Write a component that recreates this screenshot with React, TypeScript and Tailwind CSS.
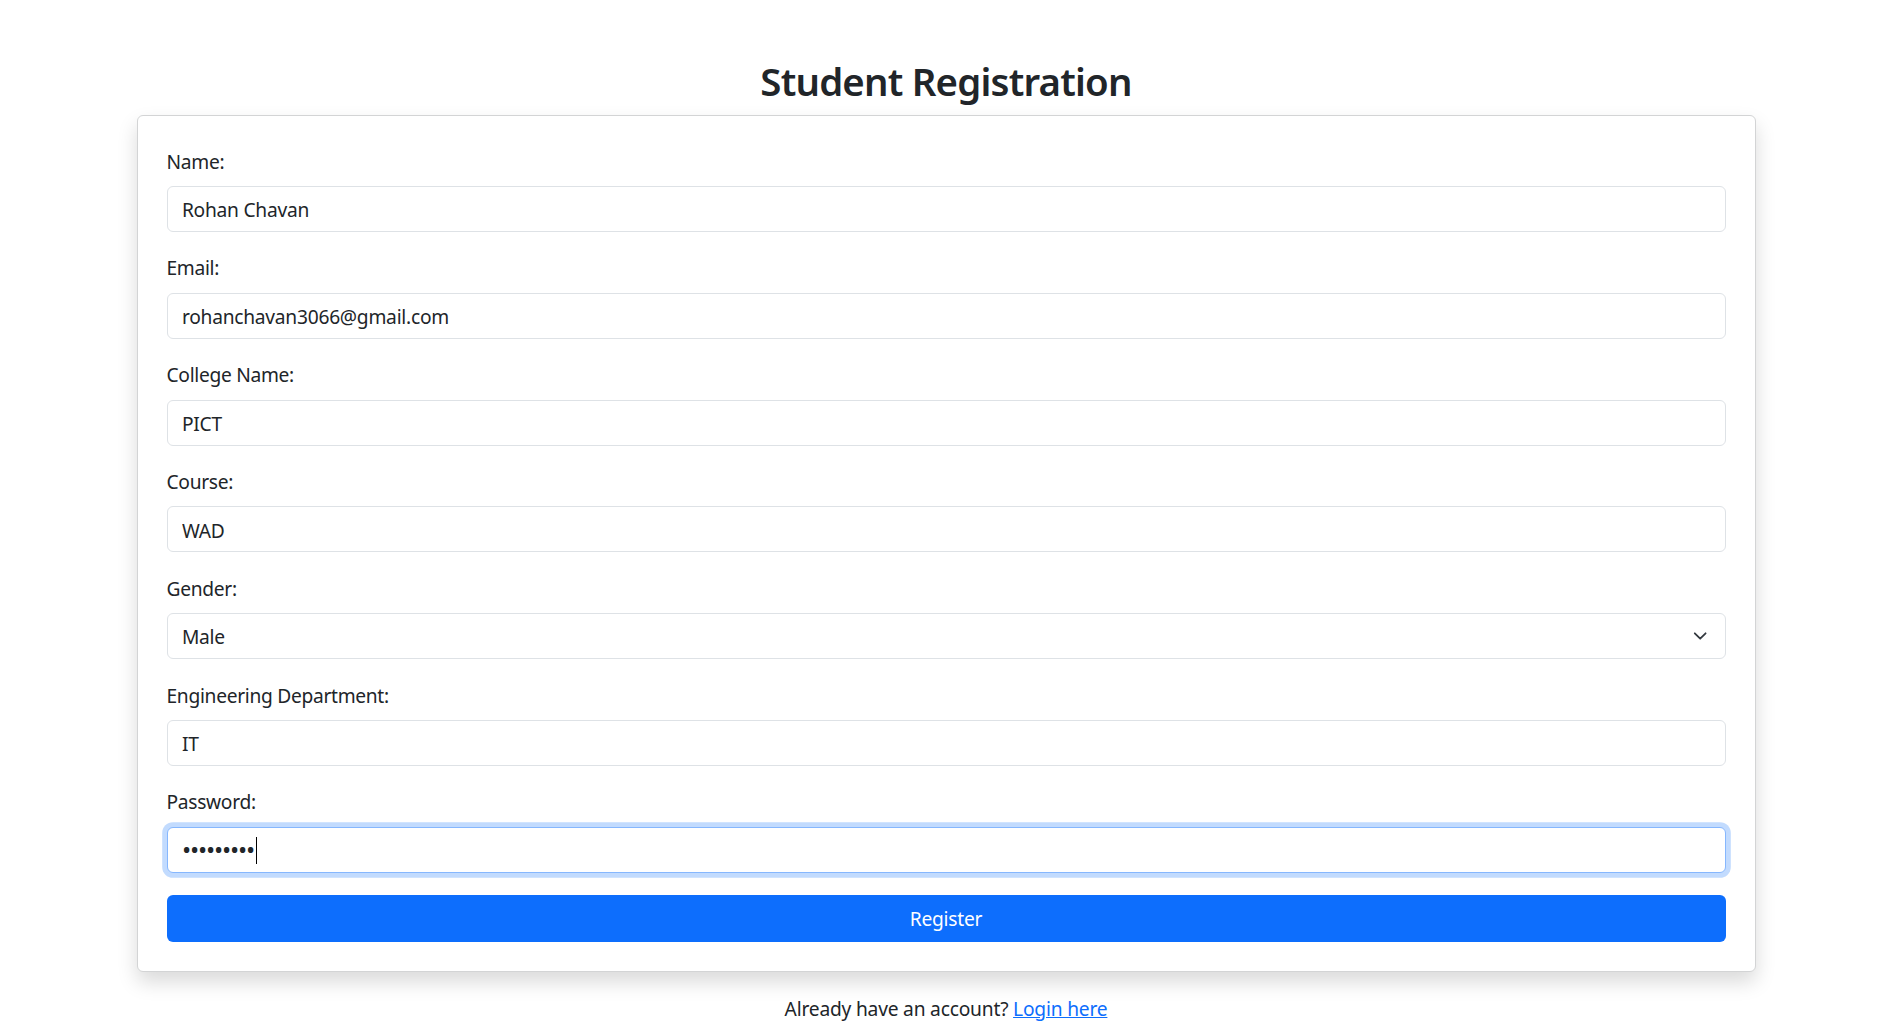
import { useState } from "react";

const fields = [
  { id: "name", label: "Name:", type: "text" },
  { id: "email", label: "Email:", type: "email" },
  { id: "college", label: "College Name:", type: "text" },
  { id: "course", label: "Course:", type: "text" },
];

const inputClass =
  "block h-[46px] w-full rounded-[6px] border border-[#dee2e6] bg-white px-[14.4px] pt-[2px] text-[19.2px] leading-[28.8px] tracking-[-0.25px] text-[#212529] outline-none";

function Field({ label, htmlFor, children }: { label: string; htmlFor: string; children: React.ReactNode }) {
  return (
    <div className="mb-[22.4px]">
      <label
        htmlFor={htmlFor}
        className="mb-[9.6px] block text-[19.2px] leading-[28.8px] tracking-[-0.3px] text-[#212529]"
      >
        {label}
      </label>
      {children}
    </div>
  );
}

export default function App() {
  const [form, setForm] = useState({
    name: "Rohan Chavan",
    email: "rohanchavan3066@gmail.com",
    college: "PICT",
    course: "WAD",
    gender: "Male",
    department: "IT",
    password: "123456789",
  });

  const update = (key: string, value: string) => setForm((prev) => ({ ...prev, [key]: value }));

  return (
    <div className="min-h-screen bg-white pt-[58px] font-['Noto_Sans',sans-serif] text-[#212529]">
      <div className="mx-auto w-[1619px]">
        <h2 className="mb-[11px] text-center text-[38.4px] leading-[46px] font-semibold tracking-[-0.8px] text-[#212529]">
          Student Registration
        </h2>

        <form
          className="rounded-[6px] border border-[#d3d4d5] bg-white px-[29px] pt-[31.6px] pb-[29px] shadow-[0_10px_20px_rgba(0,0,0,0.15)]"
          onSubmit={(e) => e.preventDefault()}
        >
          {fields.map((f) => (
            <Field key={f.id} label={f.label} htmlFor={f.id}>
              <input
                id={f.id}
                type={f.type}
                className={inputClass}
                value={form[f.id as keyof typeof form]}
                onChange={(e) => update(f.id, e.target.value)}
              />
            </Field>
          ))}

          <Field label="Gender:" htmlFor="gender">
            <div className="relative">
              <select
                id="gender"
                className={`${inputClass} appearance-none pr-[43px]`}
                value={form.gender}
                onChange={(e) => update("gender", e.target.value)}
              >
                <option>Male</option>
                <option>Female</option>
                <option>Other</option>
              </select>
              <svg
                className="pointer-events-none absolute top-1/2 right-[18.6px] h-[14.4px] w-[14.4px] -translate-y-1/2"
                viewBox="0 0 16 16"
                fill="none"
              >
                <path d="m2 5 6 6 6-6" stroke="#343a40" strokeWidth="2" strokeLinecap="round" strokeLinejoin="round" />
              </svg>
            </div>
          </Field>

          <Field label="Engineering Department:" htmlFor="department">
            <input
              id="department"
              type="text"
              className={inputClass}
              value={form.department}
              onChange={(e) => update("department", e.target.value)}
            />
          </Field>

          <Field label="Password:" htmlFor="password">
            {/* focused password box, drawn with its caret */}
            <div
              id="password"
              role="textbox"
              className="flex h-[46px] w-full items-center rounded-[6px] border border-[#86b7fe] bg-white px-[15.4px] pt-[2px] shadow-[0_0_0_4.8px_rgba(13,110,253,0.25)]"
            >
              <span className="text-[19.2px] leading-[28.8px] font-bold tracking-[0.8px] text-[#212529]">
                •••••••••
              </span>
              <span className="ml-[1px] h-[27px] w-[1px] bg-black" />
            </div>
          </Field>

          <button
            type="submit"
            className="block h-[46.7px] w-full rounded-[6px] bg-[#0d6efd] pt-[1px] text-[19.2px] leading-[28.8px] tracking-[-0.25px] text-white"
          >
            Register
          </button>
        </form>

        <p className="mt-[23px] text-center text-[19.2px] leading-[28.8px] tracking-[-0.2px] text-[#212529]">
          Already have an account?{" "}
          <a href="#" className="text-[#0d6efd] underline">
            Login here
          </a>
        </p>
      </div>
    </div>
  );
}
